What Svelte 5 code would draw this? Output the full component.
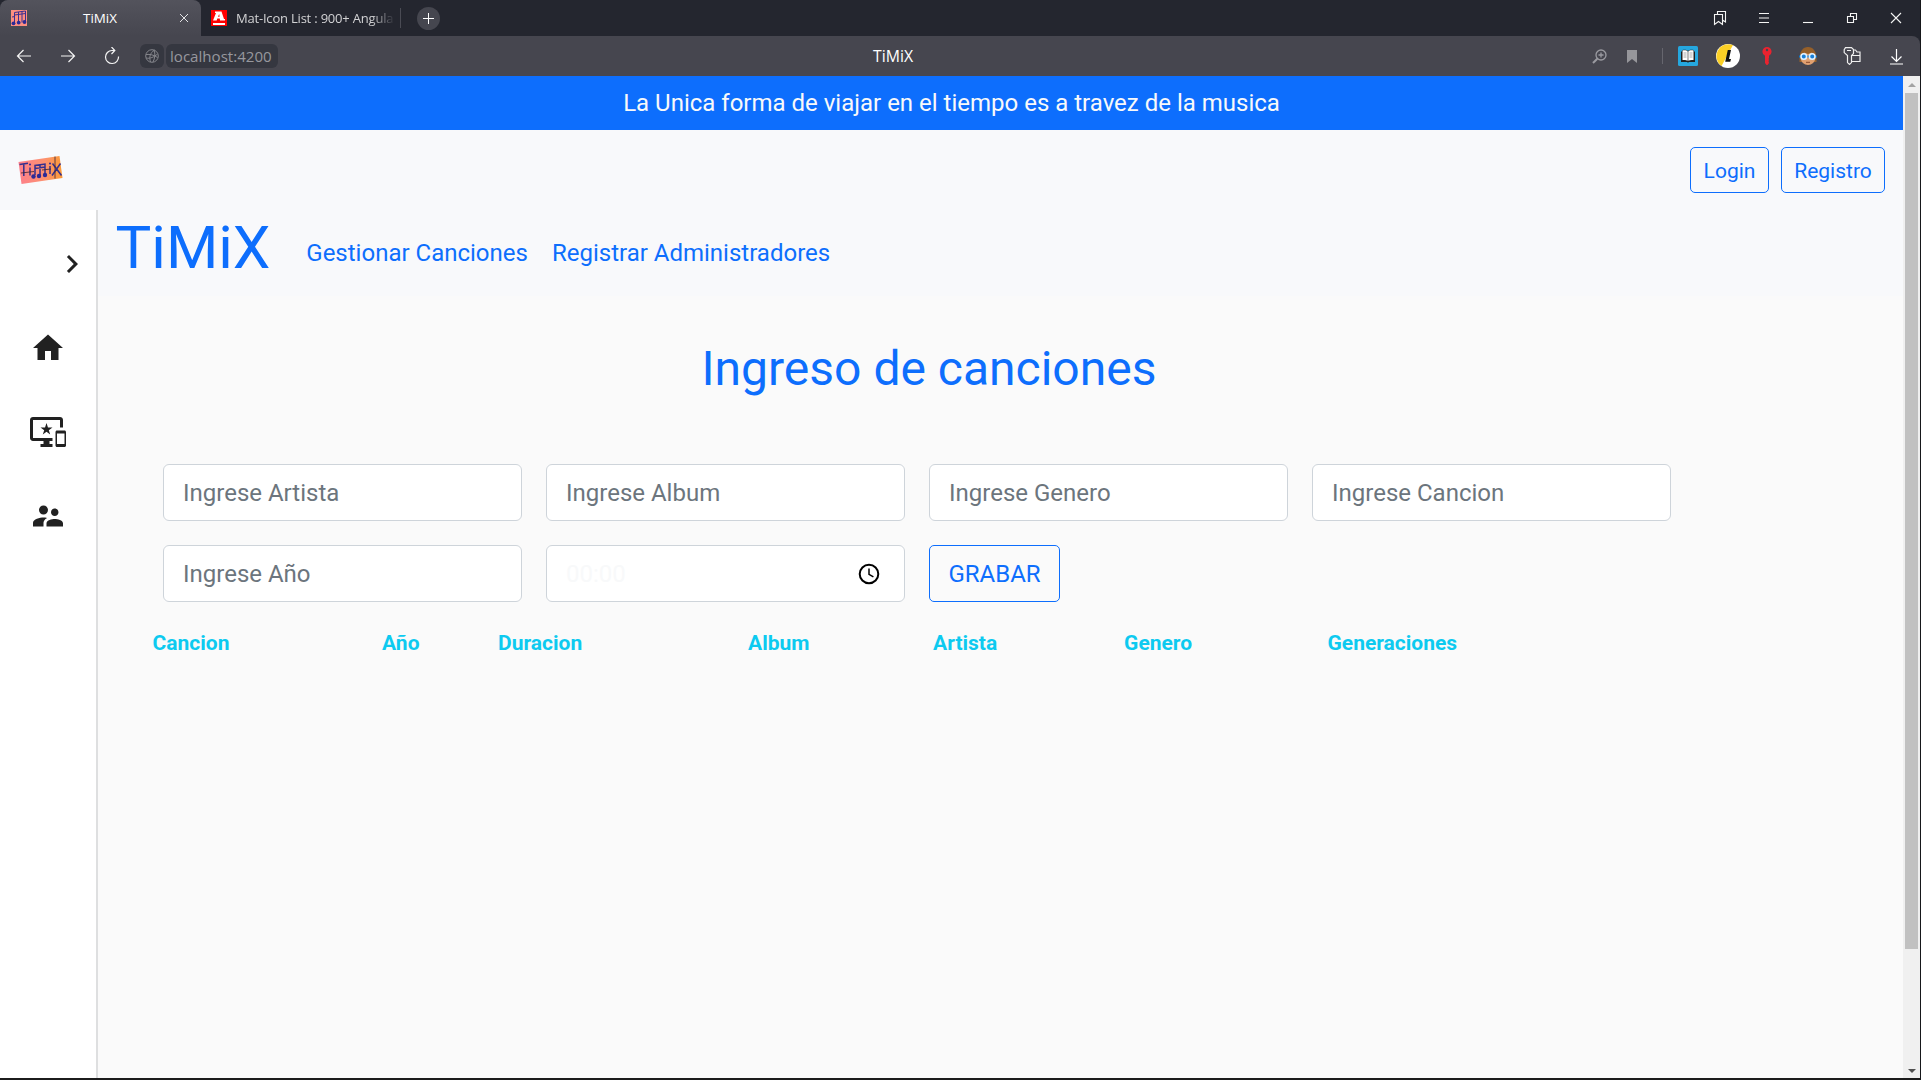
<script>
  const sideIcons = [
    { name: 'expand', d: 'M10 6 8.59 7.41 13.17 12l-4.58 4.59L10 18l6-6z' },
    { name: 'home', d: 'M10 20v-6h4v6h5v-8h3L12 3 2 12h3v8z' },
    { name: 'devices', d: 'M23 11.01L18 11c-.55 0-1 .45-1 1v9c0 .55.45 1 1 1h5c.55 0 1-.45 1-1v-9c0-.55-.45-.99-1-.99zM23 20h-5v-7h5v7zM20 2H2C.89 2 0 2.89 0 4v12c0 1.1.89 2 2 2h7v2H7v2h8v-2h-2v-2h2v-2H2V4h18v5h2V4c0-1.11-.9-2-2-2zm-8.03 7L11 6l-.97 3H7l2.47 1.76-.94 2.91 2.47-1.8 2.47 1.8-.94-2.91L15 9h-3.03z' },
    { name: 'users', d: 'M16.5 12c1.38 0 2.49-1.12 2.49-2.5S17.88 7 16.5 7C15.12 7 14 8.12 14 9.5s1.12 2.5 2.5 2.5zM9 11c1.66 0 2.99-1.34 2.99-3S10.66 5 9 5C7.34 5 6 6.34 6 8s1.34 3 3 3zm7.5 3c-1.83 0-5.5.92-5.5 2.75V19h11v-2.25c0-1.83-3.67-2.75-5.5-2.75zM9 13c-2.33 0-7 1.17-7 3.5V19h7v-2.25c0-.85.33-2.34 2.37-3.47C10.5 13.1 9.66 13 9 13z' }
  ];
  const fields = ['Ingrese Artista', 'Ingrese Album', 'Ingrese Genero', 'Ingrese Cancion', 'Ingrese Año'];
  const headers = ['Cancion', 'Año', 'Duracion', 'Album', 'Artista', 'Genero', 'Generaciones'];
</script>

<div class="window">
  <header class="tabs">
    <div class="tab active">
      <svg class="fav" width="16" height="16" viewBox="0 0 16 16">
        <rect width="16" height="16" fill="#fd8f80" />
        <path d="M3.500 13V2.500l11-1.500v11M7.500 2v11M11 1.500v11M3.500 5l11-1.500M1 7l3-.5" fill="none" stroke="#3b2f92" stroke-width="1" />
        <g fill="#2d2a96"><circle cx="2.500" cy="13.300" r="1.900" /><circle cx="7.700" cy="12.600" r="1.900" /><circle cx="13.500" cy="12" r="1.900" /></g>
      </svg>
      <span class="tab-title">TiMiX</span>
      <svg width="10" height="10" viewBox="0 0 10 10"><path d="M1 1l8 8M9 1l-8 8" stroke="#e4e4e6" stroke-width="1" /></svg>
    </div>
    <div class="tab other">
      <svg width="16" height="16" viewBox="0 0 16 16">
        <rect width="16" height="16" fill="#f00" />
        <path d="M2 10.500 5 3H4V1.500h6.500l2.500 7.500h1v1.500H9L8.800 8.500H6.300l-.6 2zM7 6.800h1.600L8.200 4z" fill="#fff" fill-rule="evenodd" />
        <rect x="2" y="13" width="12" height="2" fill="#fff" />
      </svg>
      <span class="other-title">Mat-Icon List : 900+ Angula</span>
      <i class="sep"></i>
    </div>
    <span class="plus"><svg width="11" height="11" viewBox="0 0 11 11"><path d="M5.5 0v11M0 5.5h11" stroke="#fff" /></svg></span>
    <div class="win-controls">
      <svg viewBox="0 0 16 16"><path d="M2.500 4.500h8v10l-4-3-4 3zM5.500 4V1.500h8V12l-3-2" /></svg>
      <svg viewBox="0 0 16 16"><path d="M3 3.500h10M3 8h10M3 12.500h10" /></svg>
      <svg viewBox="0 0 16 16"><path d="M3 12.500h10" /></svg>
      <svg viewBox="0 0 16 16"><path d="M3.500 6.500h6v6h-6zM6.500 6V3.500h6v6H10" /></svg>
      <svg viewBox="0 0 16 16"><path d="M3 3l10 10M13 3 3 13" /></svg>
    </div>
  </header>

  <div class="toolbar">
    <div class="nav-icons">
      <svg viewBox="0 0 16 16"><path d="M15 8H1.500M7.500 2l-6 6 6 6" /></svg>
      <svg viewBox="0 0 16 16"><path d="M1 8h13.500M8.500 2l6 6-6 6" /></svg>
      <svg viewBox="0 0 16 18"><path d="M14.500 9.500A6.500 6.500 0 1 1 8 3.500h2.500M7.500 0l3.300 3.500L7.500 7" /></svg>
    </div>
    <span class="globe">
      <svg width="14" height="14" viewBox="0 0 14 14"><path d="M7 .7a6.300 6.300 0 1 0 0 12.600A6.300 6.300 0 1 0 7 .7M1 5.500c4-.5 8 .5 11.500 3M9.500 1C5 4 4 8 5.500 13M9 1c1.500 4 1 8-1 12M1 9c4 1 8-1 11.500-4" /></svg>
    </span>
    <span class="url">localhost:4200</span>
    <span class="page-title">TiMiX</span>
    <div class="extensions">
      <svg class="e1" width="15" height="15" viewBox="0 0 15 15"><g fill="none" stroke="#9b9ba1" stroke-width="1.300"><circle cx="9" cy="6" r="5" /><path d="M9 3.500v5M6.500 6h5" /><path d="M5.300 9.700 1 14" stroke-width="2" /></g></svg>
      <svg class="e2" width="10" height="13" viewBox="0 0 10 13"><path d="M0 0h10v13L5 9l-5 4z" fill="#96969b" /></svg>
      <i class="e3"></i>
      <svg class="e4" width="20" height="20" viewBox="0 0 20 20"><rect width="20" height="20" rx="1.500" fill="#25a7df" /><path d="M3 5.500h1L4.500 4C7 3.500 9 4 10 5c1-1 3-1.500 5.500-1l.5 1.500h1V16h-6l-1 .8L9 16H3z" fill="#222" /><path d="M4.500 4.500C7 4 9 4.500 9.700 5.500v9.300C8.500 14 6.500 13.700 4.500 14zM15.500 4.500C13 4 11 4.500 10.300 5.500v9.300c1.200-.8 3.200-1.100 5.200-.8z" fill="#fff" /><path d="M5.500 7h3M5.500 9h3M5.500 11h3M11.500 7h3M11.500 9h3M11.500 11h3" stroke="#888" stroke-width=".7" /></svg>
      <svg class="e5" width="24" height="24" viewBox="0 0 24 24"><circle cx="12" cy="12" r="12" fill="#fff" /><path d="M17 1.100A12 12 0 0 0 5.500 22z" fill="#fbd026" /><path d="M11.800 6h3.200L13 15h2l-.7 2.800H9.200z" fill="#111" /></svg>
      <svg class="e6" width="10" height="18" viewBox="0 0 10 18"><path d="M5 0a4.600 4.600 0 0 1 2 8.700V11L6.500 12l.5 1-.5 1 .5 2-1.500 2H4.500L3 16V8.700A4.600 4.600 0 0 1 5 0z" fill="#e9232f" /><circle cx="5" cy="3" r="1.200" fill="#45454e" /></svg>
      <svg class="e7" width="18" height="18" viewBox="0 0 18 18"><path d="M.5 15C0 4 4 0 9 0s9 4 8.500 15z" fill="#96602a" /><ellipse cx="9" cy="11" rx="7.200" ry="7" fill="#e0a070" /><path d="M1 8C2 3 5 1.500 9 1.500S16 3 17 8l-4-2.500L9 7 5 5.500z" fill="#96602a" /><path d="M0 8.500h18v2H0z" fill="#0a78d0" /><g fill="#1a80d8" stroke="#dff1ff" stroke-width="1.600"><circle cx="4.800" cy="9.500" r="2.800" /><circle cx="13.200" cy="9.500" r="2.800" /></g><path d="M7 15.300h4" stroke="#87472a" /></svg>
      <svg class="e8" width="18" height="18" viewBox="0 0 18 18"><path d="M2.500.6h6l2 2v4l-2 2v7l-2 1.800-2-1.800v-7l-3.300-3v-3zM4 3.500h4M10.500 3h2l1.500 2h3v9.500H9M9 8.500h8" fill="none" stroke="#eee" stroke-width="1.200" /></svg>
      <svg class="e9" width="13" height="17" viewBox="0 0 13 17"><path d="M6.500 1v12M1.500 8.500l5 5 5-5M0 16h13" fill="none" stroke="#fff" stroke-width="1.200" /></svg>
    </div>
  </div>

  <div class="viewport">
    <div class="page">
      <div class="banner">La Unica forma de viajar en el tiempo es a travez de la musica</div>
      <div class="topnav">
        <svg class="logo" width="46" height="30" viewBox="0 0 46 30">
          <defs><linearGradient id="sunset"><stop offset="0" stop-color="#fd7f8b" /><stop offset=".6" stop-color="#fd9270" /><stop offset="1" stop-color="#fb9a35" /></linearGradient></defs>
          <path d="M.5 7 41.500 1l3 22L3.500 29z" fill="url(#sunset)" />
          <g fill="none" stroke="#34308f" stroke-width="1.500"><path d="M1.500 9.500 10 8.300M5.800 9v12M12 12.500v8M17 20v-9.500l10-1.500v10M22 10v10M17 13.500l10-1.500M32 11v8M34.500 8.500l9 12M42.500 8.500l-8.500 12" /><path d="M3 18 16 16.500M24 15l9-1M37 1.500v22" stroke="#3a2530" stroke-width=".8" /></g>
          <g fill="#2d2a96"><circle cx="15.500" cy="21.500" r="2.200" /><circle cx="21" cy="21" r="2.200" /><circle cx="27" cy="20" r="2.200" /><circle cx="12" cy="9.500" r="1" /><circle cx="32" cy="8.500" r="1" /></g>
        </svg>
        <div class="auth"><button class="login">Login</button><button class="register">Registro</button></div>
      </div>
      <div class="body">
        <aside>
          {#each sideIcons as icon}
            <div class="side-row {icon.name}"><svg width="36" height="36" viewBox="0 0 24 24"><path d={icon.d} fill="#212121" /></svg></div>
          {/each}
        </aside>
        <main>
          <nav><span class="brand">TiMiX</span><a href="#songs">Gestionar Canciones</a><a href="#admins">Registrar Administradores</a></nav>
          <h1>Ingreso de canciones</h1>
          <form>
            {#each fields as field}<input type="text" placeholder={field} />{/each}
            <div class="time"><span>00:00</span>
              <svg width="24" height="24" viewBox="0 0 24 24"><g fill="none" stroke="#000"><circle cx="12" cy="12" r="9.300" stroke-width="2" /><path d="M12 6.500V12.300l4.400 2.600" stroke-width="1.500" /></g></svg>
            </div>
            <button type="button">GRABAR</button>
          </form>
          <div class="thead">{#each headers as h}<span>{h}</span>{/each}</div>
        </main>
      </div>
    </div>
    <div class="scroll"><i class="up"></i><div class="thumb"></div><i class="down"></i></div>
  </div>
</div>

<style>
  :global(body) { margin: 0; overflow: hidden; background: #16171a; }
  * { box-sizing: border-box; }
  .window { width: 1920px; height: 1080px; display: flex; flex-direction: column; border-bottom: 2px solid #1c1c1c; font-family: Roboto, sans-serif; background: #24262f; }
  .tabs { height: 36px; flex: none; display: flex; align-items: center; background: #24262f; font: 13px "Open Sans", sans-serif; color: #d2d2d4; }
  .tab { height: 36px; display: flex; align-items: center; }
  .active { width: 201px; padding: 0 12px 0 11px; border-radius: 8px 8px 0 0; background: linear-gradient(#53535c, #46464f); color: #fff; }
  .tab-title { flex: 1; text-align: center; padding-right: 6px; font-size: 13.4px; }
  .other { width: 200px; padding-left: 10px; }
  .other-title { margin-left: 9px; width: 159px; overflow: hidden; white-space: nowrap; letter-spacing: -0.2px; -webkit-mask-image: linear-gradient(90deg, #000 85%, transparent); mask-image: linear-gradient(90deg, #000 85%, transparent); }
  .sep { width: 1px; height: 20px; background: #4a4b54; margin-left: 5px; }
  .plus { width: 23px; height: 23px; margin-left: 16px; border-radius: 50%; background: #45464f; display: grid; place-items: center; }
  .win-controls { margin-left: auto; display: flex; gap: 28px; padding-right: 16px; }
  .win-controls svg { width: 16px; height: 16px; fill: none; stroke: #f4f4f4; stroke-width: 1.1; }
  .toolbar { height: 40px; flex: none; display: flex; align-items: center; background: #46464f; border-radius: 0 8px 0 0; }
  .nav-icons { display: flex; gap: 28px; padding-left: 16px; }
  .nav-icons svg { width: 16px; height: 18px; fill: none; stroke: #f4f4f4; stroke-width: 1.2; }
  .globe { width: 24px; height: 24px; margin-left: 20px; border-radius: 6px; background: #353740; display: grid; place-items: center; fill: none; stroke: #85868c; }
  .url { margin-left: 2px; height: 24px; width: 112px; border-radius: 6px; background: #353740; color: #97989e; font: 15.1px/25px "Open Sans", sans-serif; padding-left: 4px; white-space: nowrap; }
  .page-title { margin-left: 595px; width: 45px; color: #fff; font: 15.8px/20px "Open Sans", sans-serif; }
  .extensions { margin-left: auto; display: flex; align-items: center; padding-right: 17px; }
  .e2 { margin-left: 20px; }
  .e3 { margin-left: 25px; width: 1px; height: 16px; background: #66666e; }
  .e4 { margin-left: 15px; }
  .e5 { margin-left: 18px; }
  .e6 { margin-left: 22px; }
  .e7 { margin-left: 27px; }
  .e8 { margin-left: 26px; }
  .e9 { margin-left: 29px; }
  .viewport { flex: 1; display: flex; min-height: 0; }
  .page { width: 1903px; display: flex; flex-direction: column; background: #fafafa; }
  .banner { height: 54px; flex: none; background: #0d6efd; color: #f8f9fa; font-size: 24px; line-height: 54px; text-align: center; }
  .topnav { height: 80px; flex: none; display: flex; justify-content: space-between; align-items: center; padding: 0 18px; background: #f8f9fb; }
  .auth { display: flex; gap: 12px; }
  button { font-family: inherit; color: #0d6efd; border: 1px solid #0d6efd; background: transparent; border-radius: 5px; margin: 0; }
  .auth button { height: 46px; font-size: 21px; padding: 2px 0 0; }
  .login { width: 79px; }
  .register { width: 104px; }
  .body { flex: 1; display: flex; }
  aside { width: 98px; background: #fff; border-right: 2px solid #dedfe0; padding-top: 12px; }
  .side-row { height: 84px; display: flex; align-items: center; padding-left: 30px; }
  .side-row.expand { padding-left: 54px; }
  main { flex: 1; }
  nav { height: 86px; display: flex; background: #f8f9fb; color: #0d6efd; padding-left: 17.5px; }
  .brand { font-size: 60px; line-height: 75px; width: 190.8px; }
  nav a { color: inherit; text-decoration: none; font-size: 24px; line-height: 86px; margin-right: 24px; }
  h1 { margin: 44px 0 0; padding-right: 143px; text-align: center; font-weight: 400; font-size: 48px; line-height: 58px; color: #0d6efd; }
  form { margin: 66px 0 0 65px; display: grid; grid-template-columns: repeat(4, 359px); gap: 24px; }
  input, .time { height: 57px; width: 359px; border: 1px solid #ced4da; border-radius: 6px; background: #fff; padding: 0 19px; font: 24px Roboto, sans-serif; }
  input::placeholder { color: #6c757d; opacity: 1; }
  .time { display: flex; align-items: center; justify-content: space-between; color: #f8f9fa; padding-right: 23.5px; }
  form button { width: 131px; height: 57px; font-size: 24px; padding: 0; }
  .thead { display: grid; grid-template-columns: 229.5px 116px 250px 185px 191px 203.4px 200px; padding-left: 54.6px; margin-top: 28px; font-size: 21px; line-height: 26px; font-weight: 700; color: #0dcaf0; }
  .scroll { width: 17px; background: #f0f0f0; display: flex; flex-direction: column; align-items: center; padding: 7px 0 5px; }
  .up, .down { border: 4px solid transparent; width: 0; height: 0; }
  .up { border-bottom-color: #a3a3a3; border-top: 0; }
  .down { border-top-color: #505050; border-bottom: 0; margin-top: auto; }
  .thumb { width: 13px; height: 856px; margin-top: 6px; background: #c1c1c1; }
</style>
